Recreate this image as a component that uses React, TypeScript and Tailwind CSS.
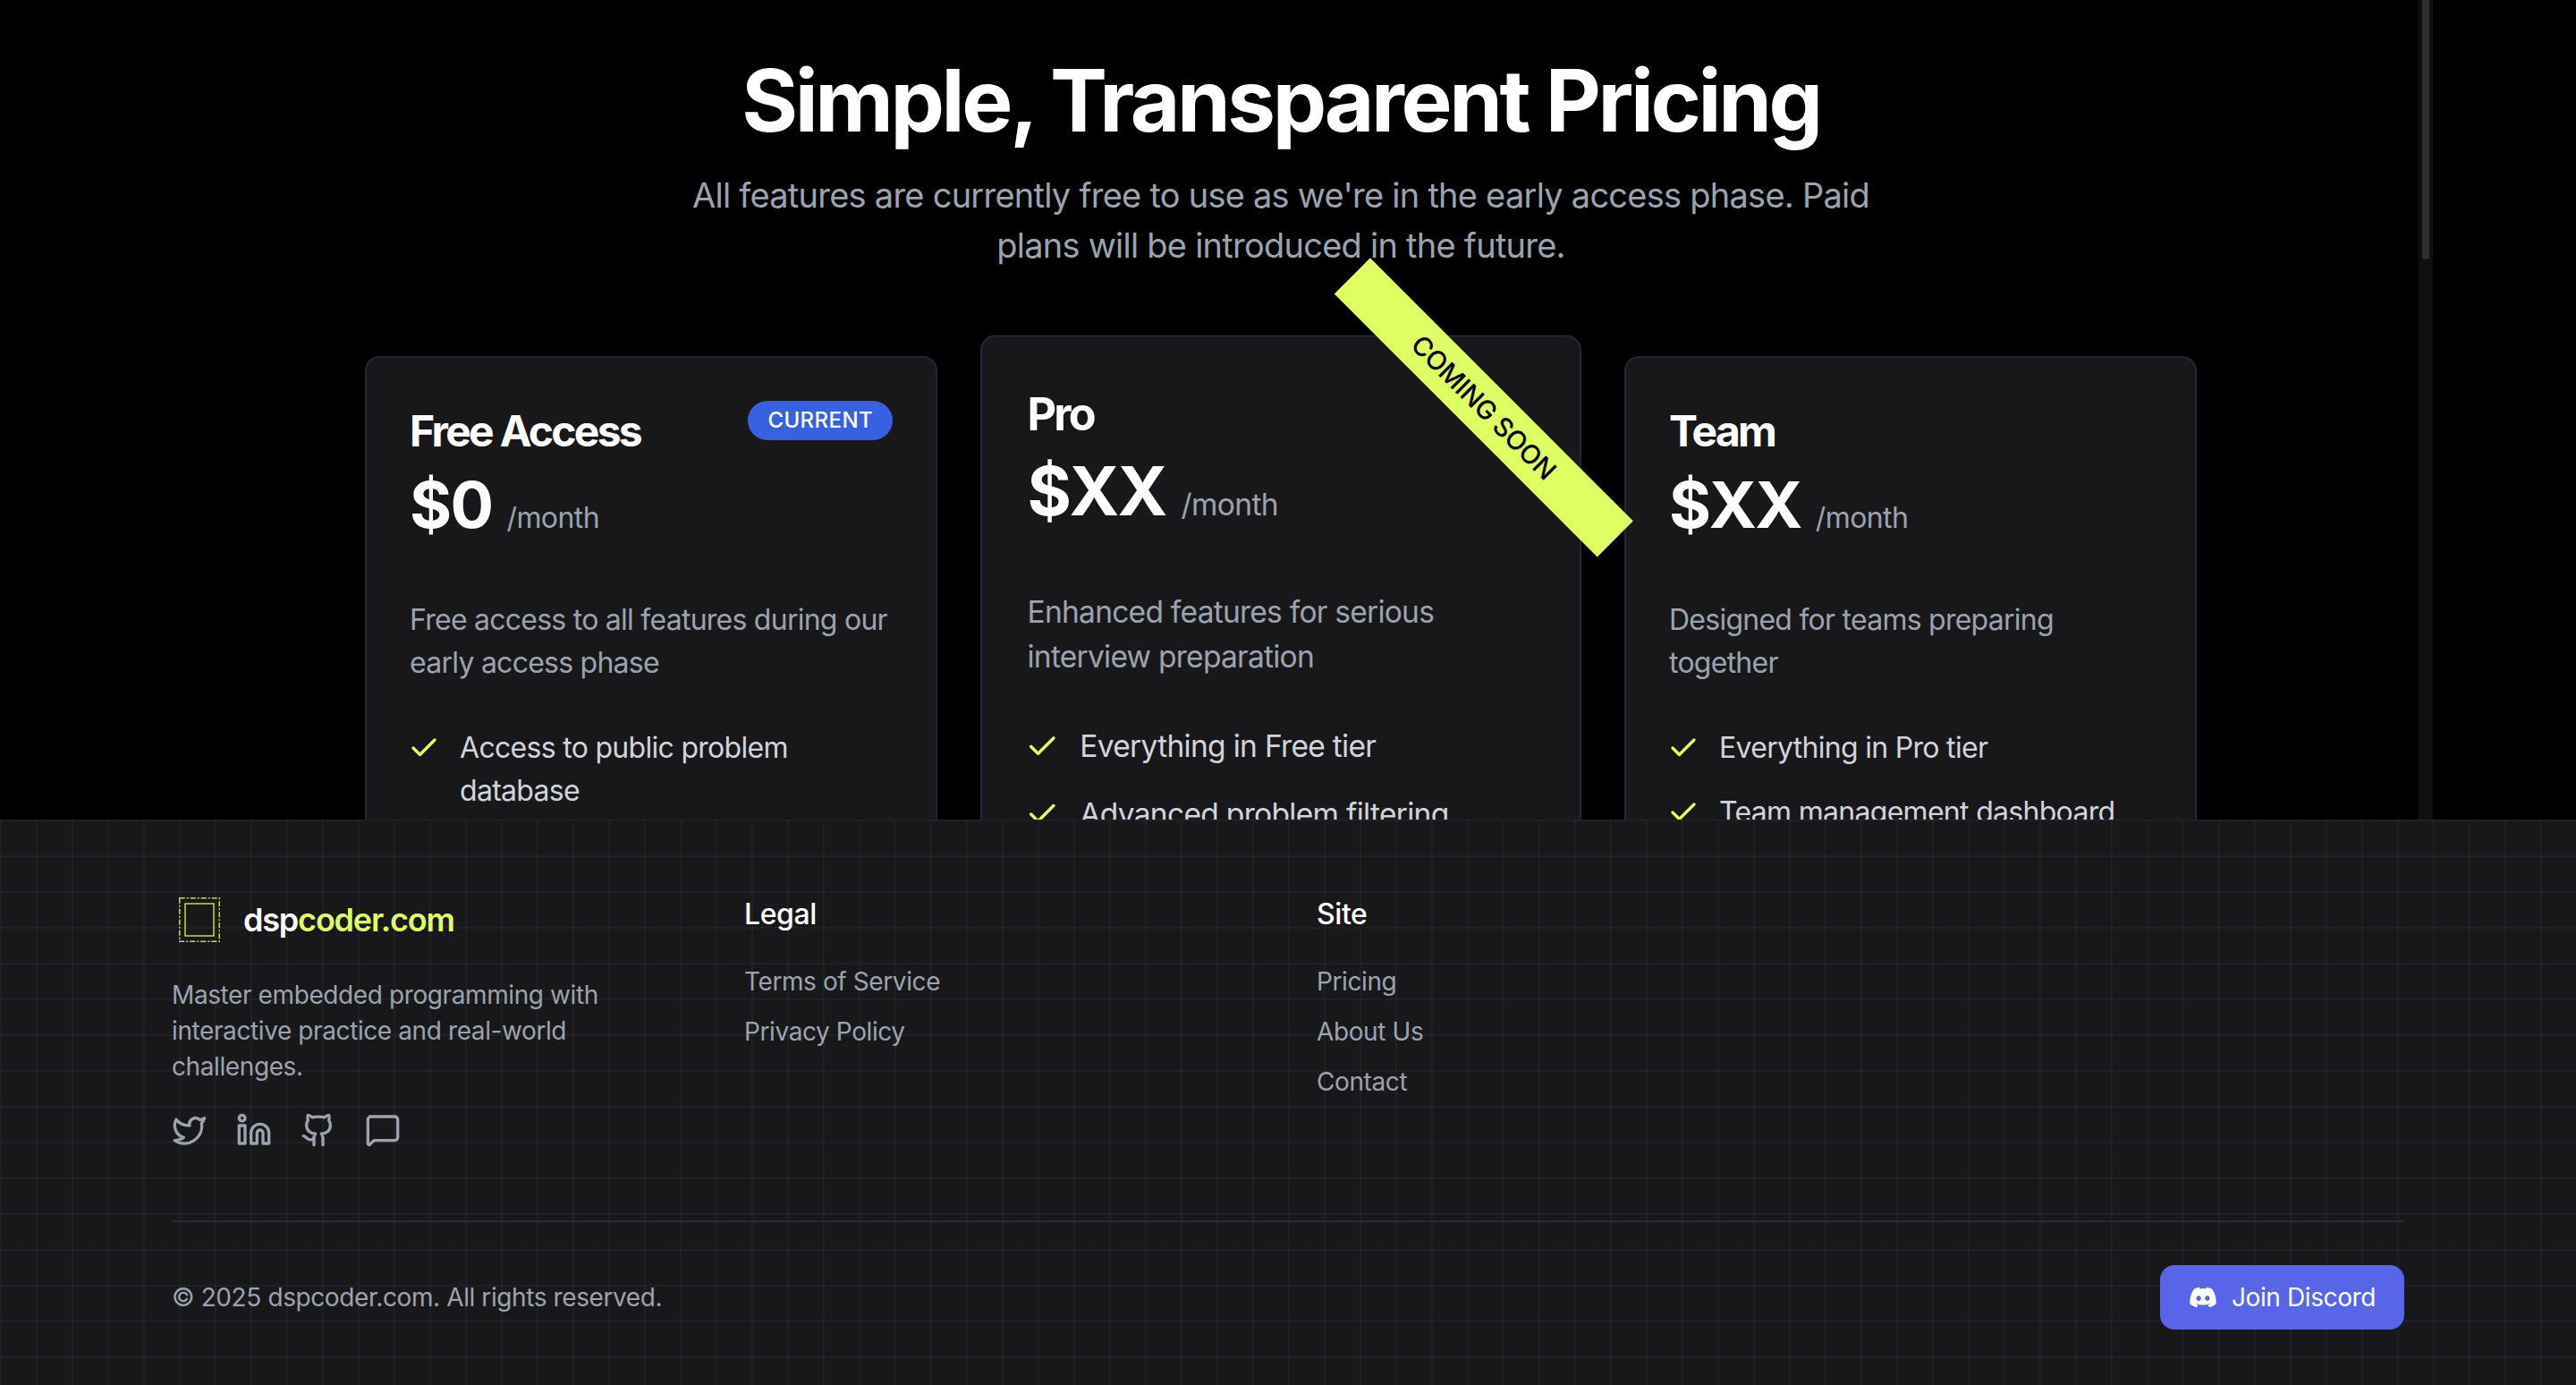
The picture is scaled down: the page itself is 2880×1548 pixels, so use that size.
import React from "react";
import { Check, Github, Linkedin, MessageSquare, Twitter } from "lucide-react";
import { FaDiscord } from "react-icons/fa";

interface Plan {
  name: string;
  price: string;
  description: string[];
  features: string[][];
  badge?: string;
  ribbon?: boolean;
}

const plans: Plan[] = [
  {
    name: "Free Access",
    price: "$0",
    description: ["Free access to all features during our", "early access phase"],
    features: [["Access to public problem", "database"], ["Basic code editor"]],
    badge: "CURRENT",
  },
  {
    name: "Pro",
    price: "$XX",
    description: ["Enhanced features for serious", "interview preparation"],
    features: [["Everything in Free tier"], ["Advanced problem filtering"]],
    ribbon: true,
  },
  {
    name: "Team",
    price: "$XX",
    description: ["Designed for teams preparing", "together"],
    features: [["Everything in Pro tier"], ["Team management dashboard"]],
  },
];

function PlanCard({ plan }: { plan: Plan }) {
  return (
    <div
      className={`relative h-[940px] rounded-[16px] border-2 border-[#1f2937] bg-[#18181b] p-[48px] ${
        plan.ribbon ? "z-10 scale-[1.05]" : ""
      }`}
    >
      {plan.ribbon && (
        <div className="absolute right-[-96px] top-[48px] flex h-[54px] w-[396px] rotate-45 items-center justify-center bg-[#dffe62] text-[28px] font-medium tracking-[-0.3px] text-black">
          COMING SOON
        </div>
      )}
      <div className="flex items-start justify-between">
        <h3 className="mt-[2px] text-[48px] font-bold leading-[64px] tracking-[-2.7px] text-white">{plan.name}</h3>
        {plan.badge && (
          <span className="rounded-full bg-[#3861e2] px-[22px] py-[6px] text-[24px] font-medium leading-[32px] tracking-[0.4px] text-white">
            {plan.badge}
          </span>
        )}
      </div>
      <div className="mt-[10px] flex items-baseline">
        <span className="text-[72px] font-bold leading-[80px] tracking-[-1.6px] text-white">{plan.price}</span>
        <span className="ml-[16px] text-[32px] tracking-[-0.6px] text-[#9ca3af]">/month</span>
      </div>
      <p className="mt-[65px] text-[32px] leading-[48px] tracking-[-0.75px] text-[#9ca3af]">
        {plan.description.map((line) => (
          <span key={line} className="block">
            {line}
          </span>
        ))}
      </p>
      <ul className="mt-[47px] flex flex-col gap-[24px]">
        {plan.features.map((lines) => (
          <li key={lines[0]} className="flex items-start gap-[22px] text-[32px] leading-[48px] tracking-[-0.7px] text-[#d1d5db]">
            <Check className="ml-[-2px] mt-[6px] h-[36px] w-[36px] shrink-0 text-[#dffe62]" strokeWidth={2.2} />
            <span>
              {lines.map((line) => (
                <span key={line} className="block">
                  {line}
                </span>
              ))}
            </span>
          </li>
        ))}
      </ul>
    </div>
  );
}

function Logo() {
  return (
    <svg width="46" height="50" viewBox="0 0 46 50" fill="none" className="shrink-0">
      <rect x="0.75" y="0.75" width="44.5" height="48.5" stroke="#dffe62" strokeWidth="1.5" strokeDasharray="6 2 2 2" opacity="0.85" />
      <rect x="7" y="7" width="32" height="36" stroke="#dffe62" strokeWidth="1.5" opacity="0.85" />
    </svg>
  );
}

export default function App() {
  return (
    <div className="min-h-screen bg-black font-['Inter',sans-serif]">
      <main className="relative h-[916px] overflow-hidden">
        <div className="w-[2864px] pt-[64px]">
          <h1 className="text-center text-[96px] font-bold leading-[96px] tracking-[-3.4px] text-white">
            Simple, Transparent Pricing
          </h1>
          <p className="mx-auto mt-[30px] max-w-[1344px] text-center text-[38px] leading-[56px] tracking-[-0.75px] text-[#9ca3af]">
            All features are currently free to use as we're in the early access phase. Paid plans will be introduced in the future.
          </p>
          <div className="mx-auto mt-[96px] grid w-[2048px] grid-cols-3 gap-[64px]">
            {plans.map((plan) => (
              <PlanCard key={plan.name} plan={plan} />
            ))}
          </div>
        </div>
        {/* scrollbar */}
        <div className="absolute bottom-0 left-[2704px] top-0 w-[16px] bg-[#0f0f10]">
          <div className="mx-auto h-[290px] w-[8px] rounded-b-[4px] bg-[#2e2e2e]" />
        </div>
      </main>

      <footer className="h-[632px] bg-[#18181b] bg-[linear-gradient(to_right,rgba(55,65,81,0.2)_2px,transparent_2px),linear-gradient(to_bottom,rgba(55,65,81,0.2)_2px,transparent_2px)] bg-[size:40px_40px] px-[192px] pt-[84px] tracking-[-0.4px]">
        <div className="grid grid-cols-4 gap-[64px]">
          <div>
            <div className="flex h-[56px] items-center gap-[26px] pl-[8px]">
              <Logo />
              <span className="text-[36px] font-semibold tracking-[-1.2px] text-white">
                dsp<span className="text-[#dffe62]">coder.com</span>
              </span>
            </div>
            <p className="mt-[36px] max-w-[500px] text-[28px] leading-[40px] text-[#9ca3af]">
              Master embedded programming with interactive practice and real-world challenges.
            </p>
            <div className="mt-[31px] flex gap-[32px] text-[#9ca3af]">
              <Twitter size={40} strokeWidth={2} />
              <Linkedin size={40} strokeWidth={2} />
              <Github size={40} strokeWidth={2} />
              <MessageSquare size={40} strokeWidth={2} />
            </div>
          </div>
          <div>
            <h4 className="text-[32px] font-medium leading-[44px] text-white">Legal</h4>
            <ul className="mt-[33px] flex flex-col gap-[16px] text-[28px] leading-[40px] text-[#9ca3af]">
              <li>Terms of Service</li>
              <li>Privacy Policy</li>
            </ul>
          </div>
          <div>
            <h4 className="text-[32px] font-medium leading-[44px] text-white">Site</h4>
            <ul className="mt-[33px] flex flex-col gap-[16px] text-[28px] leading-[40px] text-[#9ca3af]">
              <li>Pricing</li>
              <li>About Us</li>
              <li>Contact</li>
            </ul>
          </div>
        </div>
        <div className="mt-[81px] flex items-center justify-between border-t-2 border-[#2a2b33] pt-[48px]">
          <span className="text-[28px] text-[#9ca3af]">© 2025 dspcoder.com. All rights reserved.</span>
          <a className="flex h-[72px] w-[273px] items-center justify-center gap-[16px] rounded-[16px] bg-[#5865e8] text-[28px] text-white">
            <FaDiscord size={32} />
            Join Discord
          </a>
        </div>
      </footer>
    </div>
  );
}
